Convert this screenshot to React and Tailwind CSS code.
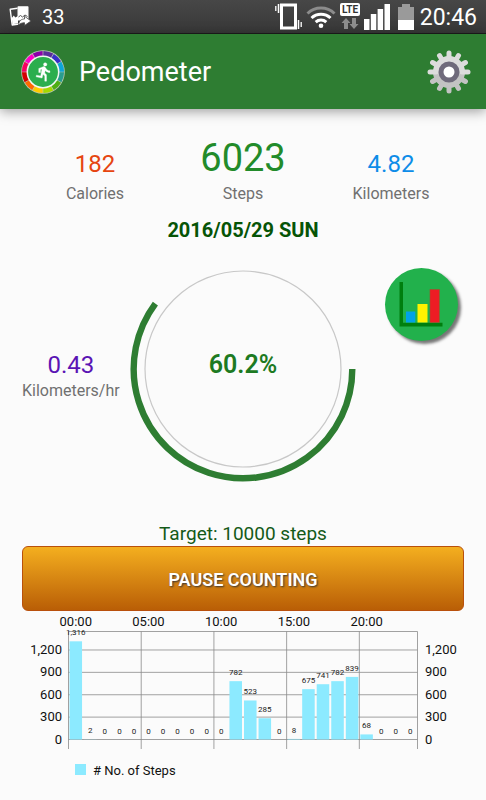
import React from "react";

const STEPS_PER_HOUR = [
  1316, 2, 0, 0, 0, 0, 0, 0, 0, 0, 0, 782,
  523, 285, 0, 8, 675, 741, 782, 839, 68, 0, 0, 0,
];

const WHEEL_COLORS = [
  "#5b2d9b", "#3730c8", "#0ea5d8", "#2a9d8f", "#4fae12", "#a6d800",
  "#ffcc00", "#ff6a00", "#d40000", "#f7005f", "#ff00c8", "#8a00a8",
];

/* point on a circle, degrees clockwise from 3 o'clock */
function polar(cx, cy, r, deg) {
  const a = (deg * Math.PI) / 180;
  return `${(cx + r * Math.cos(a)).toFixed(2)} ${(cy + r * Math.sin(a)).toFixed(2)}`;
}

/* ── Status bar ── */
function PhotoShareIcon() {
  return (
    <svg width="23" height="21" viewBox="0 0 23 21" aria-hidden="true">
      <path d="M8.500 2.300L1.200 3.300L3.200 19L10 18" fill="none" stroke="#fff" strokeWidth="1.400" strokeLinejoin="round" />
      <path d="M2.800 12l2-2.500 1.500 2 2.700-1.500v7.200l-5.500 1z" fill="#fff" />
      <path d="M9.200.9h9.600v13H9.200z" fill="#fff" stroke="#fff" strokeWidth="1.400" strokeLinejoin="round" />
      <path d="M9.500 11l2-1.500 2 1.500 2.500-2 2.500 1.500" fill="none" stroke="#555" strokeWidth="1" />
      <path d="M9.500 19c.5-4.500 3-6 6-6v-2.800l6.500 4.800-6.500 4.500v-2.800c-2.500 0-4 .8-6 2.300z" fill="#fff" stroke="#444" strokeWidth=".8" />
    </svg>
  );
}

function VibrateIcon() {
  return (
    <svg width="27" height="27" viewBox="0 0 27 27" fill="none" stroke="#fff" aria-hidden="true">
      <rect x="6.500" y="2" width="14" height="23" strokeWidth="3" />
      <path d="M3.500 1v9M23.500 17v9" strokeWidth="1.500" />
      <path d="M.8 3v5M26.200 19v5" strokeWidth="1.300" />
    </svg>
  );
}

function WifiIcon() {
  return (
    <svg width="30" height="24" viewBox="0 0 30 24" fill="none" strokeWidth="3" aria-hidden="true">
      <path d="M1.500 8.500a19.500 19.500 0 0 1 27 0" stroke="#8c8c8c" />
      <path d="M5.500 13a13.800 13.800 0 0 1 19 0" stroke="#fff" />
      <path d="M9.700 17.200a7.800 7.800 0 0 1 10.600 0" stroke="#fff" />
      <circle cx="15" cy="20.800" r="2.300" fill="#fff" />
    </svg>
  );
}

function LteIcon() {
  return (
    <svg width="20" height="27" viewBox="0 0 20 27" aria-hidden="true">
      <rect width="20" height="13" rx="2" fill="#fff" />
      <text x="10" y="10" textAnchor="middle" fontSize="10" fontWeight="700" fill="#333">LTE</text>
      <path d="M6 15l4.500 5H8v6H4v-6H1.500zM14 26l-4.500-5H12v-6h4v6h2.500z" fill="#8c8c8c" />
    </svg>
  );
}

function SignalIcon() {
  return (
    <svg width="26" height="26" viewBox="0 0 26 26" fill="#fff" aria-hidden="true">
      <rect y="15" width="5.500" height="11" />
      <rect x="6.800" y="10" width="5.500" height="16" />
      <rect x="13.600" y="5" width="5.500" height="21" />
      <rect x="20.500" width="5.500" height="26" />
    </svg>
  );
}

function BatteryIcon() {
  return (
    <svg width="16" height="26" viewBox="0 0 16 26" aria-hidden="true">
      <path d="M4 0h8v3h4v13H0V3h4z" fill="#9a9a9a" />
      <rect y="16" width="16" height="10" fill="#fff" />
    </svg>
  );
}

function StatusBar() {
  return (
    <div className="flex h-[34px] items-center border-b border-[#1c1c1c] bg-linear-to-b from-[#474747] to-[#383838] px-[9px] text-white">
      <PhotoShareIcon />
      <span className="ml-[10px] text-[20px]">33</span>
      <div className="ml-auto flex items-center">
        <VibrateIcon />
        <span className="ml-1"><WifiIcon /></span>
        <span className="ml-1"><LteIcon /></span>
        <span className="ml-1"><SignalIcon /></span>
        <span className="ml-2"><BatteryIcon /></span>
        <span className="ml-[6px] pt-[2px] text-[23px] leading-none">20:46</span>
      </div>
    </div>
  );
}

/* ── App bar ── */
function AppLogo() {
  return (
    <svg width="44" height="44" viewBox="0 0 44 44" aria-hidden="true">
      <circle cx="22" cy="22" r="21.800" fill="#b9c9b4" />
      {WHEEL_COLORS.map((color, i) => (
        <path
          key={color}
          d={`M${polar(22, 22, 18.600, i * 30 - 89)}A18.600 18.600 0 0 1 ${polar(22, 22, 18.600, i * 30 - 61)}`}
          fill="none"
          stroke={color}
          strokeWidth="5"
        />
      ))}
      <circle cx="22" cy="22" r="15.700" fill="#2bae4e" stroke="#f2f7f2" strokeWidth="1.500" />
      <path
        transform="translate(12.600 11.400) scale(.86)"
        d="M13.490 5.480c1.100 0 2-.9 2-2s-.9-2-2-2-2 .9-2 2 .9 2 2 2zm-3.600 13.900l1-4.400 2.100 2v6h2v-7.500l-2.100-2 .6-3c1.300 1.500 3.300 2.500 5.500 2.500v-2c-1.900 0-3.500-1-4.300-2.400l-1-1.600c-.4-.6-1-1-1.700-1-.3 0-.5.1-.8.1l-5.200 2.200v4.700h2v-3.400l1.800-.7-1.600 8.100-4.900-1-.4 2 7 1.400z"
        fill="#fff"
        stroke="#fff"
        strokeWidth=".4"
      />
    </svg>
  );
}

function GearIcon() {
  return (
    <svg width="44" height="44" viewBox="0 0 44 44" aria-hidden="true">
      <defs>
        <linearGradient id="gear" gradientUnits="userSpaceOnUse" x1="0" y1="0" x2="0" y2="44">
          <stop offset=".5" stopColor="#dcdcdc" />
          <stop offset=".5" stopColor="#c3c3c3" />
        </linearGradient>
      </defs>
      <circle cx="22" cy="22" r="16" fill="url(#gear)" />
      {Array.from({ length: 12 }, (_, i) => (
        <path
          key={i}
          d={`M${polar(22, 22, 13, i * 30)}L${polar(22, 22, 19, i * 30)}`}
          stroke={i > 0 && i < 6 ? "#c3c3c3" : "#dcdcdc"}
          strokeWidth="5"
          strokeLinecap="round"
        />
      ))}
      <circle cx="22" cy="22" r="8" fill="#fff" stroke="#6f6a7b" strokeWidth="5" />
    </svg>
  );
}

function AppBar() {
  return (
    <header className="flex h-[75px] items-center bg-[#2e7d32] pr-[15px] pl-[21px] shadow-[0_2px_12px_rgba(0,0,0,0.4)]">
      <AppLogo />
      <h1 className="ml-[14px] pt-[2px] text-[27px] text-white">Pedometer</h1>
      <button type="button" aria-label="Settings" className="ml-auto cursor-pointer">
        <GearIcon />
      </button>
    </header>
  );
}

/* ── Numbers ── */
function Stat({ label, children }) {
  return (
    <div className="flex flex-col items-center">
      {children}
      <span className="text-[16px] leading-6 text-[#707070]">{label}</span>
    </div>
  );
}

function ProgressRing({ percent }) {
  const end = (percent / 100) * 360;
  return (
    <div className="grid place-items-center">
      <svg className="col-start-1 row-start-1" width="226" height="226" viewBox="0 0 226 226" fill="none" aria-hidden="true">
        <circle cx="113" cy="113" r="98" stroke="#c8c8c8" strokeWidth="1.200" />
        <path
          d={`M${polar(113, 113, 109.300, 0)}A109.300 109.300 0 1 1 ${polar(113, 113, 109.300, end)}`}
          stroke="#2e7d32"
          strokeWidth="6.400"
        />
      </svg>
      <span className="col-start-1 row-start-1 pb-2 text-[25px] font-semibold text-[#1d7a22]">{percent}%</span>
    </div>
  );
}

function ChartButton() {
  return (
    <button
      type="button"
      aria-label="Statistics"
      className="mt-3 size-[73px] cursor-pointer rounded-full bg-[#22b14c] shadow-[3px_3px_3px_#777]"
    >
      <svg viewBox="0 0 73 73" aria-hidden="true">
        <path d="M14.500 14H18v40.700h39.500v3.700h-43z" fill="#007f0e" />
        <rect x="21" y="43.500" width="9.300" height="11" fill="#00a2e8" />
        <rect x="32.500" y="36" width="10" height="18.500" fill="#fff200" />
        <rect x="45" y="21.500" width="9.300" height="33" fill="#ed1c24" stroke="#a0522d" strokeWidth=".6" />
      </svg>
    </button>
  );
}

/* ── Hourly chart ── */
const PLOT = { left: 68.5, right: 417.5, top: 16.5, bottom: 124.5 };
const SLOT = (PLOT.right - PLOT.left) / 24;
const AXIS_MAX = 1316 * 1.1;
const yOf = (v) => PLOT.bottom - (v / AXIS_MAX) * (PLOT.bottom - PLOT.top);

function HourlyChart() {
  return (
    <svg className="mt-1 block w-full" viewBox="0 0 486 168" role="img" aria-label="Steps per hour">
      {/* grid */}
      <g stroke="#8a8a8a" strokeWidth=".8">
        <path d={`M${PLOT.left} ${PLOT.top}H${PLOT.right}`} />
        {[0, 300, 600, 900, 1200].map((v) => (
          <path key={v} d={`M${PLOT.left} ${yOf(v)}H${PLOT.right}`} />
        ))}
        {[0, 5, 10, 15, 20, 24].map((h) => (
          <path key={h} d={`M${PLOT.left + h * SLOT} ${PLOT.top}V134`} />
        ))}
      </g>

      {/* bars */}
      {STEPS_PER_HOUR.map((v, h) => (
        <g key={h}>
          <rect x={PLOT.left + h * SLOT + 1} y={yOf(v)} width={SLOT - 2} height={PLOT.bottom - yOf(v)} fill="#8ceaff" />
          <text x={PLOT.left + (h + 0.5) * SLOT} y={yOf(v) - 6} textAnchor="middle" fontSize="8" fill="#222">
            {v.toLocaleString("en-US")}
          </text>
        </g>
      ))}

      {/* axis labels */}
      <g fontSize="13" fill="#111">
        {[0, 5, 10, 15, 20].map((h) => (
          <text key={h} x={PLOT.left + (h + 0.5) * SLOT} y="11" textAnchor="middle">
            {String(h).padStart(2, "0")}:00
          </text>
        ))}
        {[0, 300, 600, 900, 1200].map((v) => (
          <React.Fragment key={v}>
            <text x="62" y={yOf(v) + 4} textAnchor="end">{v.toLocaleString("en-US")}</text>
            <text x="425" y={yOf(v) + 4}>{v.toLocaleString("en-US")}</text>
          </React.Fragment>
        ))}
        <rect x="75" y="149" width="11" height="11" fill="#8ceaff" />
        <text x="93" y="160"># No. of Steps</text>
      </g>
    </svg>
  );
}

export default function App() {
  return (
    <div className="min-h-screen bg-[#fbfbfb] font-['Roboto',sans-serif]">
      <StatusBar />
      <AppBar />

      <main className="pt-[25px]">
        <section className="grid grid-cols-3 items-end px-[21px]">
          <Stat label="Calories">
            <span className="text-[24px] leading-9 text-[#e64510]">182</span>
          </Stat>
          <Stat label="Steps">
            <span className="text-[38px] leading-12 text-[#228b2a]">6023</span>
          </Stat>
          <Stat label="Kilometers">
            <span className="text-[24px] leading-9 text-[#0d8ce8]">4.82</span>
          </Stat>
        </section>

        <p className="mt-3 text-center text-[20px] leading-6 font-bold text-[#065406]">2016/05/29 SUN</p>

        <section className="mt-[14px] grid grid-cols-[1fr_auto_1fr]">
          <div className="self-center justify-self-start pt-4 pl-[22px]">
            <Stat label="Kilometers/hr">
              <span className="text-[24px] leading-7 text-[#5a14b4]">0.43</span>
            </Stat>
          </div>
          <ProgressRing percent={60.2} />
          <div className="justify-self-end pr-[28px]">
            <ChartButton />
          </div>
        </section>

        <p className="mt-10 text-center text-[19px] leading-6 text-[#145a18]">Target: 10000 steps</p>
        <div className="px-[22px]">
          <button
            type="button"
            className="h-[65px] w-full cursor-pointer rounded-md border border-[#b9500c] bg-linear-to-b from-[#f4af1f] to-[#b95e06] pt-[2px] text-[18px] font-semibold text-white [text-shadow:1px_1px_2px_#333]"
          >
            PAUSE COUNTING
          </button>
        </div>

        <HourlyChart />
      </main>
    </div>
  );
}
